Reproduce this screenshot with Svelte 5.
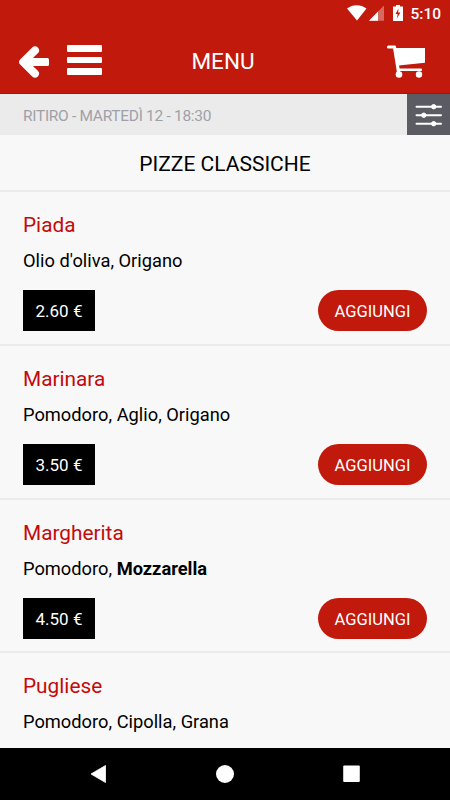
<script>
	const pizzas = [
		{ name: 'Piada', ingredients: ["Olio d'oliva", 'Origano'], price: 2.6 },
		{ name: 'Marinara', ingredients: ['Pomodoro', 'Aglio', 'Origano'], price: 3.5 },
		{ name: 'Margherita', ingredients: ['Pomodoro', 'Mozzarella'], price: 4.5, highlight: 'Mozzarella' },
		{ name: 'Pugliese', ingredients: ['Pomodoro', 'Cipolla', 'Grana'] }
	];

	function formatPrice(price) {
		return `${price.toFixed(2)} €`;
	}
</script>

<div class="screen">
	<!-- Android status bar -->
	<div class="status-bar">
		<svg width="58" height="28" viewBox="0 0 58 28" fill="#fff">
			<path d="M1 8.500C6.500 4 15 4 20.500 8.500L11 20.500Z" />
			<path d="M38 5.500V20.700H23Z" opacity="0.35" />
			<path d="M32 11.600V20.700H23Z" />
			<path d="M50 5h4v1.500h3v14.500h-10v-14.500h3Z" />
			<path d="M52.500 8.500l-3 5.500h2.200l-.8 4.500 3.500-6h-2.300Z" fill="#c1190c" />
		</svg>
		<span class="clock">5:10</span>
	</div>

	<header class="header">
		<div class="header-left">
			<button class="icon-button" aria-label="Indietro">
				<svg width="32" height="36" viewBox="0 0 32 36">
					<path d="M17 6.400 5.200 18 17 29.600" fill="none" stroke="#fff" stroke-width="8" stroke-linecap="round" stroke-linejoin="round" />
					<rect x="6" y="14" width="25" height="8" rx="1.500" fill="#fff" />
				</svg>
			</button>
			<button class="icon-button" aria-label="Menu">
				<svg width="36" height="36" viewBox="0 0 36 36" fill="#fff">
					<rect y="1" width="35" height="7" rx="1" />
					<rect y="13" width="35" height="6" rx="1" />
					<rect y="24" width="35" height="7" rx="1" />
				</svg>
			</button>
		</div>
		<h1>MENU</h1>
		<button class="icon-button cart" aria-label="Carrello">
			<svg width="40" height="36" viewBox="0 0 40 36" fill="#fff">
				<path d="M2.500 3H8.500L12.500 28" fill="none" stroke="#fff" stroke-width="3.200" stroke-linecap="round" stroke-linejoin="round" />
				<path d="M9.500 4H39V18.800L12.500 21.500Z" />
				<rect x="11" y="24.500" width="25" height="2.600" rx="1" />
				<circle cx="13" cy="30.500" r="3.300" />
				<circle cx="33" cy="30.500" r="3.200" />
			</svg>
		</button>
	</header>

	<div class="order-bar">
		<span>RITIRO - MARTEDÌ 12 - 18:30</span>
		<button class="filter-button" aria-label="Filtri">
			<svg width="43" height="41" viewBox="0 0 43 41" fill="#fff" stroke="#fff">
				<path d="M9.500 12.700h24.500M9.500 21.200h24.500M9.500 29.700h24.500" stroke-width="2" stroke-linecap="round" />
				<circle cx="26.700" cy="12.700" r="2.200" />
				<circle cx="16.800" cy="21.200" r="2.200" />
				<circle cx="26.700" cy="29.700" r="2.200" />
			</svg>
		</button>
	</div>

	<main class="list">
		<h2>PIZZE CLASSICHE</h2>
		{#each pizzas as pizza}
			<article class="item">
				<h3>{pizza.name}</h3>
				<p>
					{#each pizza.ingredients as ingredient, i}{i > 0 ? ', ' : ''}{#if ingredient === pizza.highlight}<strong>{ingredient}</strong>{:else}{ingredient}{/if}{/each}
				</p>
				{#if pizza.price}
					<div class="item-footer">
						<span class="price">{formatPrice(pizza.price)}</span>
						<button class="add-button">AGGIUNGI</button>
					</div>
				{/if}
			</article>
		{/each}
	</main>

	<!-- Android navigation bar -->
	<nav class="nav-bar">
		<svg width="20" height="20" viewBox="0 0 20 20"><path d="M3 10 17.500 1.500V18.500Z" fill="#fff" stroke="#fff" stroke-width="0.800" stroke-linejoin="round" /></svg>
		<svg width="20" height="20" viewBox="0 0 20 20"><circle cx="10" cy="10" r="9" fill="#fff" /></svg>
		<svg width="20" height="20" viewBox="0 0 20 20"><rect x="1.200" y="1.500" width="16.600" height="16.600" rx="1" fill="#fff" /></svg>
	</nav>
</div>

<style>
	:global(body) {
		margin: 0;
	}

	.screen {
		display: flex;
		flex-direction: column;
		width: 450px;
		height: 800px;
		overflow: hidden;
		background-color: #f8f8f8;
		color: #000;
		font-family: Roboto, sans-serif;
	}

	button {
		border: none;
		padding: 0;
		font-family: inherit;
		cursor: pointer;
	}

	svg {
		display: block;
	}

	.status-bar {
		display: flex;
		flex: none;
		justify-content: flex-end;
		gap: 6px;
		height: 28px;
		padding-right: 9px;
		background-color: #c1190c;
		color: #fff;
	}

	.clock {
		font-size: 15.5px;
		font-weight: 500;
		line-height: 28px;
	}

	.header {
		display: grid;
		flex: none;
		grid-template-columns: 1fr auto 1fr;
		align-items: center;
		box-sizing: border-box;
		height: 66px;
		padding: 3px 24px 0 18px;
		background-color: #c1190c;
		border-bottom: 1px solid #b80b04;
		color: #fff;
	}

	.header-left {
		display: flex;
		gap: 17px;
	}

	.icon-button {
		background: none;
	}

	.cart {
		justify-self: end;
	}

	h1 {
		margin: 0;
		padding: 0 0 3px 2px;
		font-size: 22.5px;
		font-weight: 400;
		line-height: 34px;
	}

	.order-bar {
		display: flex;
		flex: none;
		align-items: center;
		justify-content: space-between;
		height: 41px;
		padding-left: 23px;
		background-color: #ebebeb;
		color: #a0a0a8;
		font-size: 15.5px;
		letter-spacing: -0.3px;
	}

	.order-bar span {
		padding-top: 2px;
	}

	.filter-button {
		background-color: #5b5b64;
	}

	.list {
		flex: 1;
		min-height: 0;
		overflow: hidden;
	}

	h2 {
		box-sizing: border-box;
		height: 57px;
		margin: 0;
		padding-top: 1px;
		border-bottom: 2px solid #ebebeb;
		font-size: 21px;
		font-weight: 400;
		line-height: 56px;
		text-align: center;
	}

	.item {
		box-sizing: border-box;
		height: 153.8px;
		padding: 20px 23px 0;
		border-bottom: 2px solid #ebebeb;
	}

	h3 {
		margin: 0;
		color: #c40a0a;
		font-size: 20.8px;
		font-weight: 400;
		line-height: 27px;
	}

	p {
		margin: 9px 0 17px;
		font-size: 18.3px;
		line-height: 25px;
	}

	.item-footer {
		display: flex;
		justify-content: space-between;
	}

	.price {
		width: 72px;
		height: 41px;
		background-color: #000;
		color: #fff;
		font-size: 17px;
		line-height: 42px;
		text-align: center;
	}

	.add-button {
		width: 109px;
		height: 41px;
		padding-top: 2px;
		border-radius: 21px;
		background-color: #c1190c;
		color: #fff;
		font-size: 16.5px;
	}

	.nav-bar {
		display: flex;
		flex: none;
		align-items: center;
		justify-content: space-between;
		height: 52px;
		padding: 0 88px;
		background-color: #000;
	}
</style>
